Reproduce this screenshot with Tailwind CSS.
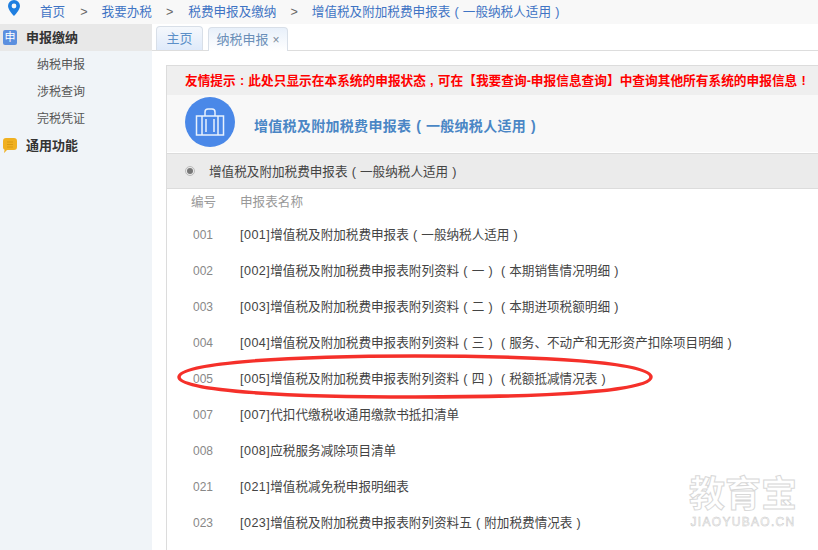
<!DOCTYPE html>
<html lang="zh-CN">
<head>
  <meta charset="UTF-8" />
  <title>纳税申报</title>
  <script src="https://cdn.jsdelivr.net/npm/@tailwindcss/browser@4"></script>
</head>
<body class="bg-white">
  <div class="relative w-[818px] h-[550px] overflow-hidden bg-white text-[12.6px] text-[#444] [word-spacing:0.65px] font-['Liberation_Sans','Noto_Sans_CJK_SC',sans-serif]">

    <!-- breadcrumb -->
    <div class="flex items-center h-6 bg-[#f8f8f8] text-[#3f74c4]">
      <svg class="ml-[8px] mb-[8px] w-[12px] h-[16px]" viewBox="0 0 12 16"><path fill="#1f7fe0" fill-rule="evenodd" d="M6 0a6 6 0 0 0-6 6c0 4 6 10 6 10s6-6 6-10a6 6 0 0 0-6-6zm0 3.6a2.4 2.4 0 1 1 0 4.8 2.4 2.4 0 0 1 0-4.8z"/></svg>
      <span class="ml-[20px]">首页</span>
      <span class="ml-[15px] text-[#666]">&gt;</span>
      <span class="ml-[14px]">我要办税</span>
      <span class="ml-[14px] text-[#666]">&gt;</span>
      <span class="ml-[15px]">税费申报及缴纳</span>
      <span class="ml-[14px] text-[#666]">&gt;</span>
      <span class="ml-[14px]">增值税及附加税费申报表 ( 一般纳税人适用 )</span>
    </div>

    <div class="flex h-[526px]">
      <!-- sidebar -->
      <div class="w-[152px] shrink-0 bg-[#f0f4f8]">
        <div class="flex items-center h-[27px] bg-[#e8e8e8] text-[13px] font-bold text-[#333]">
          <span class="ml-[3px] flex items-center justify-center w-[14px] h-[15px] rounded-[2px] bg-[#5b8fdf] text-[11px] font-normal leading-none text-white">申</span>
          <span class="ml-[9px]">申报缴纳</span>
        </div>
        <div class="flex items-center h-[27px] pl-[37px] text-xs text-[#555]">纳税申报</div>
        <div class="flex items-center h-[27px] pl-[37px] text-xs text-[#555]">涉税查询</div>
        <div class="flex items-center h-[27px] pl-[37px] text-xs text-[#555]">完税凭证</div>
        <div class="flex items-center h-[27px] text-[13px] font-bold text-[#333]">
          <svg class="ml-[3px] w-[14px] h-[15px]" viewBox="0 0 14 15"><path fill="#f0b020" d="M3 0h8a3 3 0 0 1 3 3v6a3 3 0 0 1-3 3H4l-3 3 .6-3.2A3 3 0 0 1 0 9V3a3 3 0 0 1 3-3z"/><path stroke="#d99a10" d="M4 4h6M4 6.500h6M4 9h6"/></svg>
          <span class="ml-[9px]">通用功能</span>
        </div>
      </div>

      <!-- main -->
      <div class="flex-1 min-w-0">
        <div class="flex items-end h-[27px] pl-[4px] gap-[5px] border-b border-[#ddd] text-[13px]">
          <div class="flex items-center justify-center w-[47px] h-[24px] rounded-t-[4px] border border-b-0 border-[#d8dfe8] bg-gradient-to-b from-[#f5f8fc] to-[#dfeafa] text-[#5b8fc8]">主页</div>
          <div class="flex items-center justify-center w-[80px] h-[24px] -mb-px rounded-t-[4px] border border-b-0 border-[#d8dfe8] bg-gradient-to-b from-[#e8f0fa] to-white text-[#6a8fb8]">纳税申报<span class="ml-[4px] text-[12px] leading-none text-[#7a8a9a]">×</span></div>
        </div>

        <div class="ml-[14px] mt-[14px] h-[485px] border-l border-t border-[#dcdcdc]">
          <div class="flex items-center h-[29px] pt-[2px] pl-[18px] bg-[#efefef] text-[12.7px] font-bold text-[#f00] whitespace-nowrap">友情提示 : 此处只显示在本系统的申报状态 , 可在【我要查询-申报信息查询】中查询其他所有系统的申报信息 !</div>
          <div class="flex items-center h-[57px] pl-[18px] bg-[#f8f8f8]">
            <div class="self-start mt-[2px] flex items-center justify-center w-[50px] h-[50px] rounded-full bg-[#4a88e8]">
              <svg class="w-[30px] h-[30px]" viewBox="0 0 30 30" fill="none" stroke="#e8f1fd" stroke-width="1.500"><rect x="1.500" y="9" width="27" height="19"/><path d="M10 9V5a3 3 0 0 1 3-3h4a3 3 0 0 1 3 3v4M7 9v19M23 9v19M11 12v13M19 12v13"/></svg>
            </div>
            <span class="ml-[19px] mt-[5px] text-[14px] tracking-[0.3px] font-bold text-[#4a86c5]">增值税及附加税费申报表 ( 一般纳税人适用 )</span>
          </div>
          <div class="flex items-center h-[36px] mt-px pl-[18px] bg-[#ebebeb] border-y border-[#dcdcdc]">
            <span class="flex items-center justify-center w-[10px] h-[10px] rounded-full border border-[#bbb]"><span class="w-[6px] h-[6px] rounded-full bg-[#777]"></span></span>
            <span class="ml-[14px] mt-[2px]">增值税及附加税费申报表 ( 一般纳税人适用 )</span>
          </div>

          <div class="flex items-center h-[27px] pb-[1px] pl-[24px] text-[#999]">
            <span class="w-[49px]">编号</span><span>申报表名称</span>
          </div>
          <div class="flex flex-col">
            <div class="flex items-center h-[36px] pt-[2px] pl-[26px]"><span class="w-[47px] text-xs text-[#888]">001</span><span><span class="tracking-[0.45px]">[001]</span>增值税及附加税费申报表 ( 一般纳税人适用 )</span></div>
            <div class="flex items-center h-[36px] pt-[2px] pl-[26px]"><span class="w-[47px] text-xs text-[#888]">002</span><span><span class="tracking-[0.45px]">[002]</span>增值税及附加税费申报表附列资料 ( 一 )&nbsp; ( 本期销售情况明细 )</span></div>
            <div class="flex items-center h-[36px] pt-[2px] pl-[26px]"><span class="w-[47px] text-xs text-[#888]">003</span><span><span class="tracking-[0.45px]">[003]</span>增值税及附加税费申报表附列资料 ( 二 )&nbsp; ( 本期进项税额明细 )</span></div>
            <div class="flex items-center h-[36px] pt-[2px] pl-[26px]"><span class="w-[47px] text-xs text-[#888]">004</span><span><span class="tracking-[0.45px]">[004]</span>增值税及附加税费申报表附列资料 ( 三 )&nbsp; ( 服务、不动产和无形资产扣除项目明细 )</span></div>
            <div class="flex items-center h-[36px] pt-[2px] pl-[26px]"><span class="w-[47px] text-xs text-[#888]">005</span><span><span class="tracking-[0.45px]">[005]</span>增值税及附加税费申报表附列资料 ( 四 )&nbsp; ( 税额抵减情况表 )</span></div>
            <div class="flex items-center h-[36px] pt-[2px] pl-[26px]"><span class="w-[47px] text-xs text-[#888]">007</span><span><span class="tracking-[0.45px]">[007]</span>代扣代缴税收通用缴款书抵扣清单</span></div>
            <div class="flex items-center h-[36px] pt-[2px] pl-[26px]"><span class="w-[47px] text-xs text-[#888]">008</span><span><span class="tracking-[0.45px]">[008]</span>应税服务减除项目清单</span></div>
            <div class="flex items-center h-[36px] pt-[2px] pl-[26px]"><span class="w-[47px] text-xs text-[#888]">021</span><span><span class="tracking-[0.45px]">[021]</span>增值税减免税申报明细表</span></div>
            <div class="flex items-center h-[36px] pt-[2px] pl-[26px]"><span class="w-[47px] text-xs text-[#888]">023</span><span><span class="tracking-[0.45px]">[023]</span>增值税及附加税费申报表附列资料五 ( 附加税费情况表 )</span></div>
          </div>
        </div>
      </div>
    </div>

    <!-- red hand-drawn ring over row 005 -->
    <svg class="absolute left-0 top-0 pointer-events-none" width="818" height="550" fill="none">
      <path d="M179 377C179 362 300 356 415 356C540 356 651 362 651 377C651 392 540 397 415 397C300 397 179 392 179 377Z" stroke="#f5302a" stroke-width="3.500" />
    </svg>

    <!-- watermark -->
    <div class="absolute left-[688px] top-[475px] w-[110px] text-center text-white [-webkit-text-stroke:1px_#d8d8d8] pointer-events-none">
      <div class="text-[36px] leading-[40px] font-bold whitespace-nowrap">教育宝</div>
      <div class="text-[12px] leading-[14px] tracking-[1.3px] [-webkit-text-stroke:0.5px_#c8c8c8] whitespace-nowrap">JIAOYUBAO.CN</div>
    </div>
  </div>
</body>
</html>
